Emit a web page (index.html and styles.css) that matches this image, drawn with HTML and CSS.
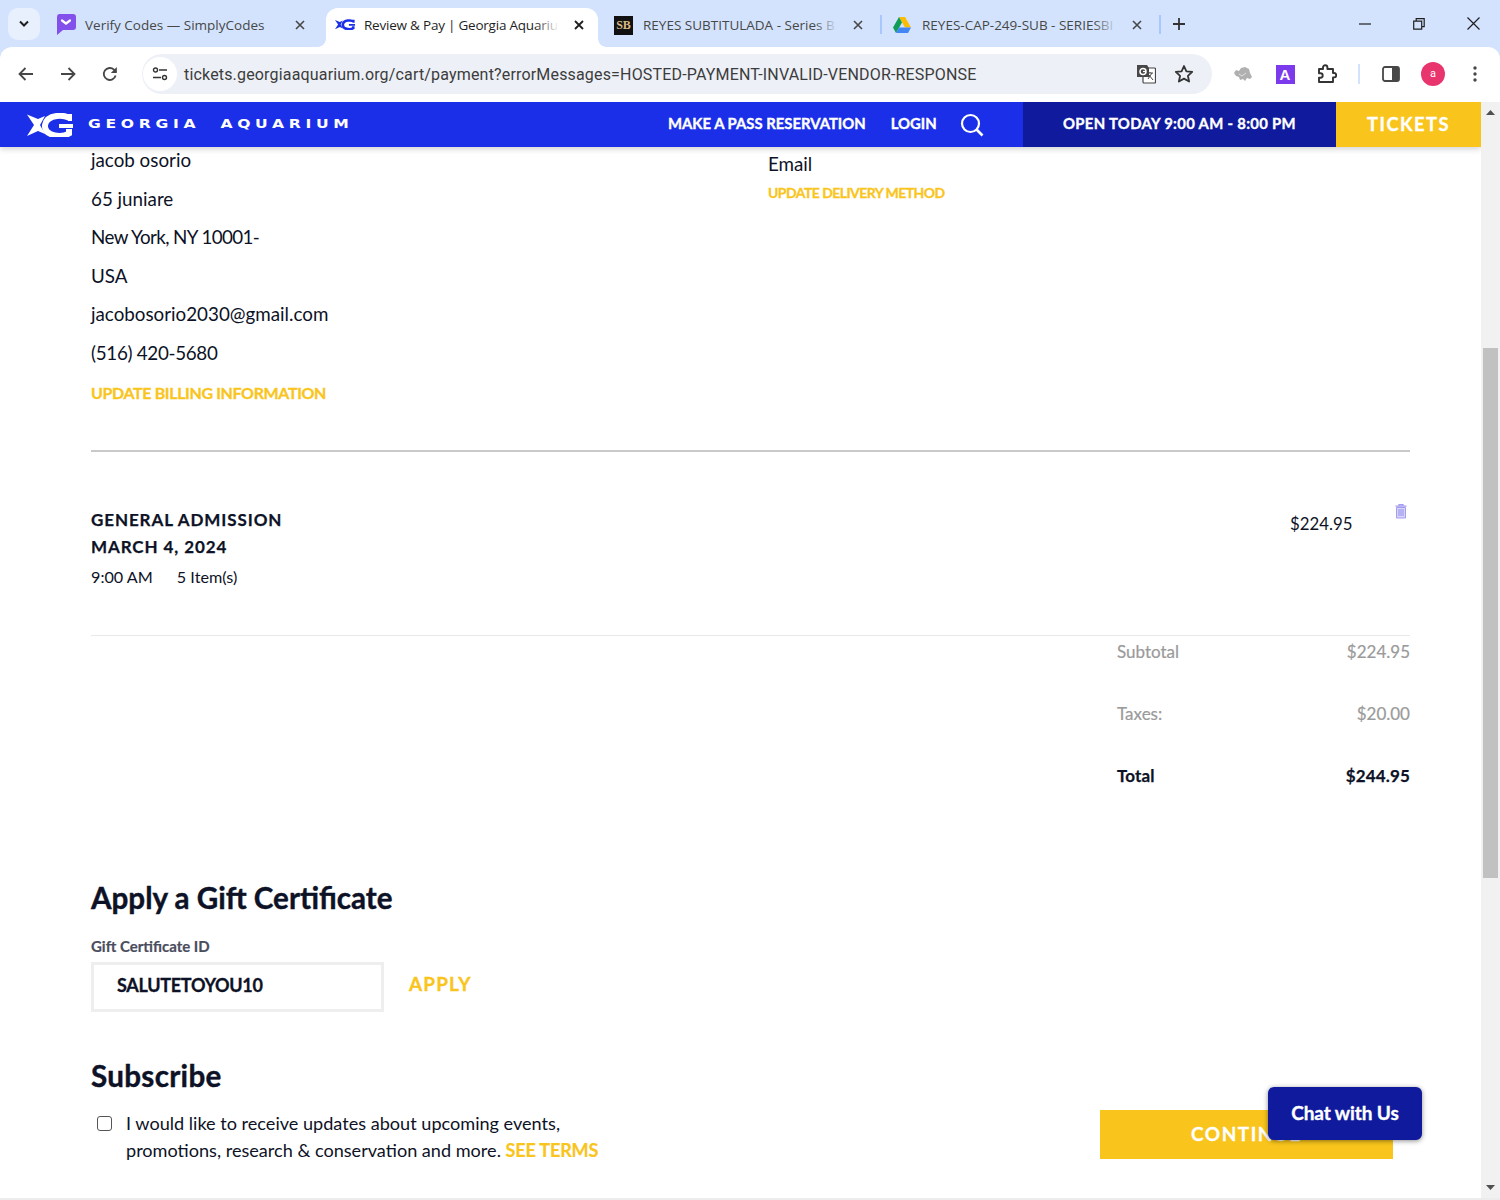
FILE: index.html
```html
<!DOCTYPE html>
<html lang="en">
<head>
<meta charset="utf-8">
<title>Review &amp; Pay | Georgia Aquarium</title>
<link rel="stylesheet" href="styles.css">
</head>
<body>
<div class="window">
  <div class="tabstrip">
    <div class="tablist-btn"><svg width="12" height="8" viewBox="0 0 12 8"><path d="M2 1.500l4 4 4-4" fill="none" stroke="#1f1f1f" stroke-width="2"/></svg></div>
    <div class="tab">
      <svg class="favicon fav-simply" width="20" height="21" viewBox="0 0 20 21"><path d="M3 0h14a3 3 0 0 1 3 3v10a3 3 0 0 1-3 3H7l-6 5V3a3 3 0 0 1 2-3z" fill="#8350ec"/><path d="M6 6.500l4 3 4-3" fill="none" stroke="#fff" stroke-width="2.200" stroke-linecap="round"/></svg>
      <span class="tab-title">Verify Codes — SimplyCodes</span>
      <svg class="tab-close" width="10" height="10" viewBox="0 0 10 10"><path d="M1 1l8 8M9 1l-8 8" stroke="#474747" stroke-width="1.600"/></svg>
    </div>
    <div class="tab-gap"></div>
    <div class="tab active">
      <svg class="favicon fav-ga" width="20" height="11" viewBox="0 0 46 24"><path d="M0 1.500l11 4.500 7-3-5 9 5 9-7-3L0 23l7-11z" fill="#1b2fe8"/><path d="M43 5.500C39 1.500 20 .5 18 12c-1 11 16 13 24 8.500V16" fill="none" stroke="#1b2fe8" stroke-width="6"/><path d="M32 11h14v4H32zM41 1h4v7h-4z" fill="#1b2fe8"/></svg>
      <span class="tab-title squeeze">Review &amp; Pay | Georgia Aquariu</span>
      <svg class="tab-close" width="10" height="10" viewBox="0 0 10 10"><path d="M1 1l8 8M9 1l-8 8" stroke="#1f1f1f" stroke-width="1.800"/></svg>
    </div>
    <div class="tab-gap"></div>
    <div class="tab">
      <span class="favicon-sb">SB</span>
      <span class="tab-title">REYES SUBTITULADA - Series B</span>
      <svg class="tab-close" width="10" height="10" viewBox="0 0 10 10"><path d="M1 1l8 8M9 1l-8 8" stroke="#474747" stroke-width="1.600"/></svg>
    </div>
    <div class="tab-gap sep"></div>
    <div class="tab">
      <svg class="favicon" width="18" height="16" viewBox="0 0 18 16"><path d="M6 0h6l6 10.500h-6z" fill="#fbbc04"/><path d="M6 0l-6 10.500 3 5.500 6-10.500z" fill="#0f9d58"/><path d="M3 16h12l3-5.500H6z" fill="#4285f4"/></svg>
      <span class="tab-title">REYES-CAP-249-SUB - SERIESBI</span>
      <svg class="tab-close" width="10" height="10" viewBox="0 0 10 10"><path d="M1 1l8 8M9 1l-8 8" stroke="#474747" stroke-width="1.600"/></svg>
    </div>
    <div class="tab-gap sep"></div>
    <div class="new-tab"><svg width="12" height="12" viewBox="0 0 12 12"><path d="M6 0v12M0 6h12" stroke="#333" stroke-width="1.800"/></svg></div>
    <div class="strip-spacer"></div>
    <div class="win-btn"><svg width="12" height="2" viewBox="0 0 12 2"><path d="M0 1h12" stroke="#1f1f1f" stroke-width="1.200"/></svg></div>
    <div class="win-btn"><svg width="12" height="12" viewBox="0 0 12 12"><path d="M.7 3.200h8v8h-8zM3.200 3V.7h8v8H9" fill="none" stroke="#1f1f1f" stroke-width="1.200"/></svg></div>
    <div class="win-btn"><svg width="13" height="13" viewBox="0 0 13 13"><path d="M.5.5l12 12M12.500.5l-12 12" stroke="#1f1f1f" stroke-width="1.200"/></svg></div>
  </div>

  <div class="toolbar">
    <div class="tool-btn"><svg width="16" height="14" viewBox="0 0 16 14"><path d="M15 7H2M7.500 1L1.500 7l6 6" fill="none" stroke="#474747" stroke-width="1.800"/></svg></div>
    <div class="tool-btn"><svg width="16" height="14" viewBox="0 0 16 14"><path d="M1 7h13M8.500 1l6 6-6 6" fill="none" stroke="#474747" stroke-width="1.800"/></svg></div>
    <div class="tool-btn"><svg width="16" height="16" viewBox="0 0 16 16"><path d="M13.600 9.500A6 6 0 1 1 12 3.700L14 6" fill="none" stroke="#474747" stroke-width="1.800"/><path d="M14.800 1v6h-6z" fill="#474747"/></svg></div>
    <div class="omnibox">
      <div class="site-info"><svg width="16" height="14" viewBox="0 0 16 14"><circle cx="3.500" cy="3" r="2" fill="none" stroke="#333" stroke-width="1.400"/><path d="M7 3h8M1 10.500h8" stroke="#333" stroke-width="1.600"/><circle cx="12.500" cy="10.500" r="2" fill="none" stroke="#333" stroke-width="1.400"/></svg></div>
      <span class="url">tickets.georgiaaquarium.org/cart/payment?errorMessages=HOSTED-PAYMENT-INVALID-VENDOR-RESPONSE</span>
      <svg class="omni-translate" width="20" height="20" viewBox="0 0 20 20"><rect x="7" y="4" width="12.500" height="15" rx="1" fill="#fff" stroke="#474747" stroke-width="1.200"/><path d="M1 1h10l2 3v9H1z" fill="#474747"/><circle cx="7" cy="7.500" r="3" fill="none" stroke="#fff" stroke-width="1.500"/><path d="M7 7.500h3" stroke="#fff" stroke-width="1.200"/><path d="M11 9h6M14 8v1M12 15l4-6M13 11l4 5" fill="none" stroke="#474747" stroke-width="1"/></svg>
      <svg class="omni-star" width="20" height="20" viewBox="0 0 20 20"><path d="M10 2l2.400 5.300 5.800.6-4.300 3.900 1.200 5.700L10 14.600l-5.100 2.900 1.200-5.700L1.800 7.900l5.800-.6z" fill="none" stroke="#333" stroke-width="1.800" stroke-linejoin="round"/></svg>
    </div>
    <div class="tool-btn first-ext"><svg width="20" height="18" viewBox="0 0 20 18"><path d="M1 8l2-3 3 1 2-3 4-1 4 2 1 4 2 4-2 2-3-1-2 3-2-2-3 1-1-3-3-1z" fill="#b0b0b0"/><path d="M6 9l3 2 4-3" fill="none" stroke="#e0e0e0" stroke-width="1"/></svg></div>
    <div class="tool-btn"><span class="ext-a">A</span></div>
    <div class="tool-btn"><svg width="20" height="20" viewBox="0 0 20 20"><path d="M2 5h4V3.500a2.200 2.200 0 0 1 4.400 0V5H16v4h1a2.200 2.200 0 0 1 0 4.400h-1V18H2v-4.300h1.500a2.200 2.200 0 0 0 0-4.400H2z" fill="none" stroke="#333" stroke-width="1.900" stroke-linejoin="round"/></svg></div>
    <div class="tool-sep"></div>
    <div class="tool-btn"><svg width="18" height="16" viewBox="0 0 18 16"><rect x="1" y="1" width="16" height="14" rx="2" fill="#fff" stroke="#474747" stroke-width="1.800"/><path d="M10 1h5a2 2 0 0 1 2 2v10a2 2 0 0 1-2 2h-5z" fill="#474747"/></svg></div>
    <div class="tool-btn"><span class="avatar">a</span></div>
    <div class="tool-btn"><svg width="4" height="16" viewBox="0 0 4 16"><circle cx="2" cy="2" r="1.700" fill="#474747"/><circle cx="2" cy="8" r="1.700" fill="#474747"/><circle cx="2" cy="14" r="1.700" fill="#474747"/></svg></div>
  </div>

  <div class="viewport">
    <div class="page">
      <header class="site-header">
        <div class="brand">
          <svg class="logo" width="46" height="24" viewBox="0 0 46 24"><path d="M0 1.500l11 4.500 7-3-5 9 5 9-7-3L0 23l7-11z" fill="#fff"/><path d="M43 5.500C39 1.500 20 .5 18 12c-1 11 16 13 24 8.500V16" fill="none" stroke="#fff" stroke-width="6"/><path d="M32 11h14v4H32zM41 1h4v7h-4z" fill="#fff"/></svg>
          <span class="wordmark">GEORGIA&nbsp; AQUARIUM</span>
        </div>
        <nav class="site-nav">
          <a class="nav-link">MAKE A PASS RESERVATION</a>
          <a class="nav-link login">LOGIN</a>
          <svg class="search" width="24" height="24" viewBox="0 0 24 24"><circle cx="10.500" cy="10.500" r="8.500" fill="none" stroke="#fff" stroke-width="2.200"/><path d="M16.500 16.500l6 6" stroke="#fff" stroke-width="2.600"/></svg>
        </nav>
        <div class="hours">OPEN TODAY 9:00 AM - 8:00 PM</div>
        <a class="tickets">TICKETS</a>
      </header>

      <main class="content">
        <section class="info-row">
          <div class="billing">
            <p class="line">jacob osorio</p>
            <p class="line">65 juniare</p>
            <p class="line tight">New York, NY 10001-</p>
            <p class="line">USA</p>
            <p class="line">jacobosorio2030@gmail.com</p>
            <p class="line snug">(516) 420-5680</p>
            <a class="update billing-link">UPDATE BILLING INFORMATION</a>
          </div>
          <div class="delivery">
            <p class="line">Email</p>
            <a class="update delivery-link">UPDATE DELIVERY METHOD</a>
          </div>
        </section>
        <hr class="rule-strong">
        <section class="item">
          <div class="item-info">
            <div class="item-name">GENERAL ADMISSION</div>
            <div class="item-name">MARCH 4, 2024</div>
            <div class="item-meta"><span>9:00 AM</span><span>5 Item(s)</span></div>
          </div>
          <div class="item-price">$224.95</div>
          <svg class="trash" width="12" height="15" viewBox="0 0 12 15"><path d="M4 1.500V.7h4v.8M.5 2.200h11" fill="none" stroke="#a49cf0" stroke-width="1.200"/><path d="M1.500 3.500h9V14h-9z" fill="#d8d5fa" stroke="#a49cf0" stroke-width="1"/><path d="M4 5v7M6 5v7M8 5v7" stroke="#8f86ea" stroke-width=".9"/></svg>
        </section>
        <hr class="rule-light">
        <section class="totals">
          <div class="total-row"><span>Subtotal</span><span>$224.95</span></div>
          <div class="total-row"><span>Taxes:</span><span>$20.00</span></div>
          <div class="total-row grand"><span>Total</span><span>$244.95</span></div>
        </section>
        <h2 class="gift-title">Apply a Gift Certificate</h2>
        <label class="field-label">Gift Certificate ID</label>
        <div class="gift-row">
          <div class="gift-input">SALUTETOYOU10</div>
          <a class="apply">APPLY</a>
        </div>
        <h2 class="subscribe-title">Subscribe</h2>
        <section class="subscribe-row">
          <div class="checkbox"></div>
          <p class="subscribe-text">I would like to receive updates about upcoming events,<br>promotions, research &amp; conservation and more. <a class="terms">SEE TERMS</a></p>
          <a class="continue">CONTINUE</a>
        </section>
      </main>
      <button class="chat">Chat with Us</button>
    </div>
    <div class="scrollbar">
      <svg class="arrow" width="9" height="5" viewBox="0 0 9 5"><path d="M4.500 0L9 5H0z" fill="#505050"/></svg>
      <div class="thumb"></div>
      <div class="track-fill"></div>
      <svg class="arrow" width="9" height="5" viewBox="0 0 9 5"><path d="M0 0h9L4.500 5z" fill="#505050"/></svg>
    </div>
  </div>
</div>
</body>
</html>
```

FILE: styles.css
```css
* { box-sizing: border-box; }
html, body { margin: 0; height: 100%; overflow: hidden; background: #fff; }
p, h2 { margin: 0; }
a { text-decoration: none; }

.window { width: 1500px; height: 1200px; display: flex; flex-direction: column; overflow: hidden; background: #d3e3fd; }

/* Browser tabs */
.tabstrip { height: 47px; flex: none; display: flex; align-items: flex-end; padding-left: 8px; font-family: "Open Sans", sans-serif; font-size: 13.5px; }
.tablist-btn { width: 32px; height: 32px; margin-right: 7px; margin-bottom: 7px; border-radius: 10px; background: #e8f0fe; display: flex; align-items: center; justify-content: center; }
.tab { width: 272px; height: 39px; flex: none; display: flex; align-items: center; padding: 0 0 5px 0; position: relative; color: #474747; --tab-bg: #d3e3fd; }
.tab.active { background: #fff; border-radius: 12px 12px 0 0; color: #1f1f1f; --tab-bg: #fff; }
.tab.active::before, .tab.active::after { content: ""; position: absolute; bottom: 0; width: 8px; height: 8px; background: radial-gradient(circle at 0 0, transparent 7.500px, #fff 8px); }
.tab.active::before { left: -8px; }
.tab.active::after { right: -8px; transform: scaleX(-1); }
.favicon { flex: none; position: absolute; left: 9px; top: 9px; }
.fav-simply { top: 6px; }
.tab.active .fav-ga { top: 11px; }
.favicon-sb { position: absolute; left: 9px; top: 8px; width: 19px; height: 19px; background: #111; color: #d9b884; font: 700 12px/19px "Liberation Serif", serif; text-align: center; }
.tab-title { margin-left: 38px; width: 195px; white-space: nowrap; position: relative; }
.tab-title::after { content: ""; position: absolute; right: 0; top: 0; bottom: 0; width: 24px; background: linear-gradient(90deg, transparent, var(--tab-bg)); }
.fav-simply + .tab-title::after { display: none; }
.squeeze { letter-spacing: -.22px; }
.tab-close { flex: none; margin-left: 15px; }
.tab-gap { width: 7px; flex: none; align-self: flex-start; }
.tab-gap.sep { display: flex; justify-content: center; margin-top: 15px; height: 19px; }
.tab-gap.sep::before { content: ""; width: 2px; background: #a8c7fa; }
.new-tab { width: 30px; height: 47px; margin-left: 1px; display: flex; align-items: center; justify-content: center; }
.strip-spacer { flex: 1; }
.win-btn { width: 54px; height: 47px; flex: none; display: flex; align-items: center; justify-content: center; }

/* Browser toolbar */
.toolbar { height: 55px; flex: none; display: flex; align-items: center; padding-left: 5px; background: #fff; border-radius: 12px 12px 0 0; padding-bottom: 1px; }
.tool-btn { width: 42px; height: 40px; flex: none; display: flex; align-items: center; justify-content: center; }
.omnibox { width: 1070px; height: 40px; margin-left: 11px; border-radius: 20px; background: #edf0f7; flex: none; display: flex; align-items: center; padding-left: 1px; }
.site-info { width: 34px; height: 34px; border-radius: 50%; background: #fff; display: flex; align-items: center; justify-content: center; flex: none; }
.url { margin-left: 7px; font: 16px "Roboto", sans-serif; letter-spacing: .17px; color: #3c3c3c; white-space: nowrap; width: 952px; flex: none; }
.omni-translate { flex: none; }
.omni-star { flex: none; margin-left: 18px; }
.first-ext { margin-left: 10px; }
.ext-a { width: 19px; height: 19px; background: #7c3aed; color: #fff; font: 700 15px/19px "Liberation Sans", sans-serif; text-align: center; }
.tool-sep { width: 2px; height: 20px; margin: 0 10px; background: #d3e3fd; flex: none; }
.avatar { width: 24px; height: 24px; border-radius: 50%; background: #e8356d; color: #fff; font: 11px/24px "Roboto", sans-serif; text-align: center; }

/* Page */
.viewport { flex: 1; min-height: 0; display: flex; background: #fff; border-bottom: 2px solid #ececec; }
.page { flex: 1; min-width: 0; position: relative; display: flex; flex-direction: column; overflow: hidden; font-family: "Lato", sans-serif; color: #0d1226; }
.scrollbar { width: 19px; flex: none; background: #f1f1f1; display: flex; flex-direction: column; align-items: center; padding: 8px 0; }
.arrow { flex: none; }
.thumb { width: 15px; height: 530px; margin-top: 233px; background: #c1c1c1; flex: none; }
.track-fill { flex: 1; }

.site-header { height: 45px; flex: none; display: flex; align-items: center; background: #1b2fe8; color: #fff; box-shadow: 0 2px 6px rgba(0,0,0,.18); position: relative; z-index: 2; font-weight: 700; -webkit-text-stroke: .35px #fff; }
.brand { display: flex; align-items: center; margin-left: 27px; width: 641px; }
.logo { flex: none; margin-top: 1px; }
.wordmark { margin-left: 15px; margin-bottom: 2px; font: 700 12px "DejaVu Sans", sans-serif; letter-spacing: 3.600px; white-space: nowrap; transform: scaleX(1.3); transform-origin: left center; -webkit-text-stroke: 0; }
.site-nav { display: flex; align-items: center; width: 355px; padding-bottom: 3px; }
.nav-link { color: #fff; font-size: 14.850px; white-space: nowrap; }
.login { margin-left: 25px; }
.search { margin-left: 23px; flex: none; margin-top: 3px; }
.hours { width: 313px; align-self: stretch; background: #0f1a9c; display: flex; align-items: center; justify-content: center; font-size: 14.850px; letter-spacing: .32px; white-space: nowrap; padding-bottom: 3px; }
.tickets { width: 145px; align-self: stretch; background: #f9c51c; color: #fff; font-size: 18.300px; letter-spacing: 1.500px; display: flex; align-items: center; justify-content: center; padding-bottom: 2px; margin-right: -1px; }

.content { padding: 0 71px 0 91px; flex: 1; font-size: 18.800px; }
.info-row { display: flex; margin-top: -6px; }
.billing { width: 677px; }
.line { height: 38.600px; line-height: 38.600px; white-space: nowrap; }
.tight { letter-spacing: -.6px; }
.snug { letter-spacing: -.3px; }
.update { display: block; color: #f9c51c; font-weight: 700; white-space: nowrap; -webkit-text-stroke: .3px #f9c51c; }
.billing-link { font-size: 16px; letter-spacing: -.37px; line-height: 39px; }
.delivery { padding-top: 4px; }
.delivery-link { font-size: 14px; letter-spacing: -.55px; line-height: 22px; margin-top: -2px; }
.rule-strong { margin: 38px 0 0; border: 0; height: 2px; background: #c9c9c9; }
.item { display: flex; align-items: flex-start; margin-top: 54px; position: relative; height: 129px; }
.item-info { width: 1199px; }
.item-name { font-weight: 700; font-size: 17px; letter-spacing: .9px; line-height: 27px; -webkit-text-stroke: .25px #0d1226; }
.item-meta { display: flex; gap: 24px; font-size: 16.200px; line-height: 34px; }
.item-price { width: 62px; margin-top: 6px; font-size: 16.800px; line-height: 24px; white-space: nowrap; }
.trash { position: absolute; left: 1304px; top: -2px; }
.rule-light { margin: 0; border: 0; height: 1px; background: #e9e9e9; }
.totals { margin-left: 1026px; margin-top: -1px; color: #9a9a9a; font-size: 17px; -webkit-text-stroke: .2px #9a9a9a; }
.total-row { display: flex; justify-content: space-between; height: 62px; line-height: 34px; }
.total-row.grand { color: #0d1226; font-weight: 700; letter-spacing: .15px; -webkit-text-stroke: .25px #0d1226; }
.gift-title, .subscribe-title { font-weight: 700; font-size: 29.600px; line-height: 40px; -webkit-text-stroke: .4px #0d1226; }
.gift-title { margin-top: 57px; }
.field-label { display: block; margin-top: 18px; font-weight: 700; font-size: 15px; color: #4a4d5e; line-height: 20px; -webkit-text-stroke: .2px #4a4d5e; }
.gift-row { display: flex; align-items: center; margin-top: 6px; }
.gift-input { width: 293px; height: 50px; border: 3px solid #eeeeee; padding-left: 23px; line-height: 41px; font-weight: 700; font-size: 18px; letter-spacing: -.3px; -webkit-text-stroke: .3px #0d1226; }
.apply { margin-left: 25px; margin-bottom: 6px; color: #f9c51c; font-weight: 700; font-size: 19px; letter-spacing: 1.100px; -webkit-text-stroke: .3px #f9c51c; }
.subscribe-title { margin-top: 44px; letter-spacing: .3px; }
.subscribe-row { display: flex; margin-top: 14px; position: relative; }
.checkbox { width: 15px; height: 15px; margin: 6px 0 0 6px; border: 1.500px solid #555; border-radius: 3px; flex: none; background: #fff; }
.subscribe-text { width: 974px; margin-left: 14px; font-size: 18.100px; line-height: 27px; }
.terms { color: #f9c51c; font-weight: 700; letter-spacing: -.2px; -webkit-text-stroke: .2px #f9c51c; }
.continue { width: 293px; height: 49px; padding-bottom: 2px; background: #f9c51c; color: #fff; font-weight: 700; font-size: 19px; letter-spacing: 1.500px; display: flex; align-items: center; justify-content: center; flex: none; -webkit-text-stroke: .3px #fff; }
.chat { position: absolute; left: 1268px; top: 985px; width: 154px; height: 53px; border: 0; border-radius: 6px; padding-bottom: 4px; background: #0f1a9c; color: #fff; font: 700 19px "Lato", sans-serif; letter-spacing: -.1px; -webkit-text-stroke: .35px #fff; box-shadow: 0 1px 5px rgba(0,0,0,.45); z-index: 3; }
```
